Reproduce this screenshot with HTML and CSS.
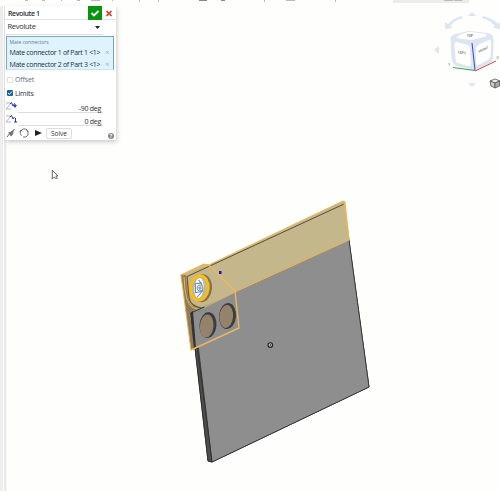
FILE: index.html
```html
<!DOCTYPE html>
<html lang="en">
<head>
<meta charset="utf-8">
<title>Revolute 1</title>
<link rel="stylesheet" href="styles.css">
</head>
<body>
<main class="workspace">
<svg class="scene" viewBox="0 0 500 491" width="500" height="491">
  <!-- toolbar edge -->
  <path d="M393 0h76v3h-76z" fill="#ececeb"/>
  <g fill="#bbb"><path d="M25 0h3v1h-3zM42 0h3v1h-3zM61 0h1v1h-1zM77 0h3v1h-3zM91 0h9v1h-9zM112 0h1v1h-1zM139 0h1v2h-1zM158 0h1v2h-1zM264 0h1v2h-1zM286 0h9v1h-9zM335 0h1v2h-1zM444 0h9v1h-9zM454 0h8v1h-8z"/><path fill="#888" d="M199 0h8v1h-8zM221 0h4v1h-4z"/></g>
  <!-- large plate -->
  <path d="M191 313L344 204L369 387L212 462L208 461Z" fill="#505050" stroke="#292929"/>
  <path d="M194 311L349 240L369 387L212 462Z" fill="#8e8e8f" stroke="#303030" stroke-width=".8"/>
  <path d="M191 313L208 461L212 462L195 330Z" fill="#4d4d4d" stroke="#292929" stroke-width=".7"/>
  <!-- highlighted strip -->
  <path d="M181 275L204 264L209 265L343 201L345 202L349 240L235 292L205 307L193 312L188 308Z" fill="#c4b78b" stroke="#edb656" stroke-width="1.1"/>
  <path d="M186 277L344 204" fill="none" stroke="#55503e" stroke-width="1"/>
  <path d="M344 203L349 240" fill="none" stroke="#edb656"/>
  <path d="M181 275L186 274L189 299Q190 307 199 308L190 314L196 348L191 350Z" fill="#8c7b5d" stroke="#e8ad50" stroke-width="1"/>
  <path d="M187 276L189 298Q191 307 202 308" fill="none" stroke="#685a3d" stroke-width="1.2"/>
  <path d="M183 275L205 265L210 266M184 277Q185 303 192 307Q198 311 207 307" fill="none" stroke="#edb656"/>
  <path d="M190 312L200 308L235 293L239 328L196 348Z" fill="#8e8e8f"/>
  <path d="M190 313L193 311L196 348L194 349Z" fill="#343434"/>
  <path d="M191 313L204 307" stroke="#333"/>
  <path d="M209 265L235 291L239 328L191 350" fill="none" stroke="#efb75d" stroke-width="1.4"/>
  <path d="M205 307L235 292L349 240" fill="none" stroke="#deb36a"/>
  <g transform="rotate(5 207 325)"><ellipse cx="208" cy="325" rx="8.5" ry="13" fill="#3d3d3d"/><ellipse cx="206.8" cy="326" rx="6.8" ry="11.5" fill="#94836a"/></g>
  <g transform="rotate(5 227 316)"><ellipse cx="227.5" cy="316" rx="8.5" ry="13" fill="#3d3d3d"/><ellipse cx="226.3" cy="316.5" rx="6.8" ry="11.5" fill="#94836a"/></g>
  <g transform="rotate(5 200 288)"><ellipse cx="202" cy="288" rx="10" ry="14" fill="#827250"/><ellipse cx="199.5" cy="288" rx="9" ry="12.5" fill="#c7b889" stroke="#ffbd0c" stroke-width="2.4"/><ellipse cx="199" cy="288" rx="4.5" ry="10" fill="#fff"/><path d="M195 284l6-1 2 8-7 2zM198 280l4 5M202 292l-4 5" fill="none" stroke="#6796c5" stroke-width="1.1"/><circle cx="200" cy="288" r="3" fill="#e6eff5" stroke="#6688a4" stroke-width=".8"/><path d="M198 288h4M200 286v4" stroke="#57758c" stroke-width=".7"/></g>
  <path d="M219 271h2.5v3H219z" fill="#1717c9"/>
  <circle cx="270.3" cy="345" r="2.3" fill="#bbb" stroke="#202020" stroke-width="1.1"/><circle cx="270.5" cy="345" r=".7" fill="#222"/>
  <!-- view cube -->
  <g fill="#dce6f0">
    <path d="M468 16l4-4 4 4zM468 83l4 4 4-4zM439 46l-5 4 5 4z"/>
    <path d="M461 16Q452 19 448 24L445 22V29L453 28L450 26Q455 20 463 18ZM483 16Q494 19 498 24L500 22V29L493 28L495 26Q490 20 482 18Z"/>
    <path d="M450.5 38Q451 35 457 33.5L469 31L488 33Q493 34 493.5 39L493 58Q493 62 488 64L475 71L457 66Q452 64 451.5 59Z"/>
  </g>
  <g fill="#fff"><path d="M458 36Q465 32 471 32L486 34Q488 36 484 37L472 40L459 38.5Q455 38 458 36Z"/><path d="M454.5 44Q454.5 41.5 457 42L468 45Q470 46 470 49L471 64Q471 67 468 66L458 63Q455.5 62 455.5 59Z"/><path d="M478 45L489 40Q491.5 40 491 44L490.5 57L488 60L478 65Q476 65 476 62L476 48Z"/></g>
  <text class="cube-label" transform="translate(458 53) skewY(12)" textLength="8" lengthAdjust="spacingAndGlyphs">LEFT</text>
  <text class="cube-label" transform="translate(478.5 53) skewY(-24)" textLength="9.5" lengthAdjust="spacingAndGlyphs">FRONT</text>
  <text class="cube-label top-label" x="467" y="36.8" textLength="6" lengthAdjust="spacingAndGlyphs">TOP</text>
  <path d="M472 43L475 70" stroke="#3d46d0"/><path d="M475 70.5L453 67.5" stroke="#33a944"/><path d="M475 71L496 61" stroke="#df4242"/>
  <text class="axis-x" x="496.5" y="59">X</text><text class="axis-y" x="448" y="66">Y</text>
  <g stroke="#555" stroke-width=".8"><path d="M490 81l5-2 5 2-5 2z" fill="#eee"/><path d="M490 81l5 2v5l-4-2z" fill="#ccc"/><path d="M495 83l4.5-2v5l-4.5 2z" fill="#aaa"/></g>
  <path class="pointer" d="M52.3 170v9l2-2 2 2 1-1-1.5-2h2z"/>
</svg>
<div class="side-edge"></div>
<section class="dialog">
  <header class="heading"><span>Revolute 1</span><button class="accept" aria-label="Accept"><svg width="10" height="8" viewBox="0 0 10 8"><path d="M1.5 4l2.5 2.5L8.5 2" fill="none" stroke="#fff" stroke-width="1.9"/></svg></button><button class="dismiss" aria-label="Cancel"><svg width="6" height="7" viewBox="0 0 6 7"><path d="M.6 1l4.8 5M5.4 1L.6 6" stroke="#d64a35" stroke-width="1.8"/></svg></button></header>
  <div class="select"><span>Revolute</span><svg width="5" height="3" viewBox="0 0 5 3"><path d="M0 0h5L2.5 3z" fill="#222"/></svg></div>
  <div class="connectors"><small>Mate connectors</small><p><span>Mate connector 1 of Part 1 &lt;1&gt;</span><i>×</i></p><p><span>Mate connector 2 of Part 3 &lt;1&gt;</span><i>×</i></p></div>
  <label class="option offset"><span class="box"></span>Offset</label>
  <label class="option limits"><span class="box checked"><svg width="6" height="6" viewBox="0 0 6 6"><path d="M1 3l1.4 1.4L5 1.5" fill="none" stroke="#fff"/></svg></span>Limits</label>
  <div class="limit"><svg width="13" height="9" viewBox="0 0 13 9"><path d="M1 1h5L1 7h5" fill="none" stroke="#a6adb5" stroke-width=".9"/><path d="M5 2l1.5-1.5L8 4l1.5-2.5L11 4" fill="none" stroke="#2933cf"/><path d="M8 3h4l-2 3z" fill="#2933cf"/></svg><span>-90 deg</span></div>
  <div class="limit"><svg width="13" height="9" viewBox="0 0 13 9"><path d="M1 1h5L1 7h5" fill="none" stroke="#a6adb5" stroke-width=".9"/><path d="M5 2l1.5-1.5L8 4l1.5-2M10.5 3v4M9 7h3" fill="none" stroke="#2933cf"/></svg><span>0 deg</span></div>
  <footer class="actions"><svg width="10" height="10" viewBox="0 0 10 10"><path d="M1 9l3-4M8.5 1L6 4" stroke="#666"/><path d="M2 4.5l3-1 3-2-1 5-2 2z" fill="#777"/></svg><svg width="10" height="10" viewBox="0 0 10 10"><path d="M2.5 7.8A4 4 0 0 1 2 2.5L4 1h2.5L9 3v4L7 9H4M.5 4l1.5-2 1.5 1.5M7 1l2 3" fill="none" stroke="#666" stroke-width=".9"/></svg><svg width="7" height="8" viewBox="0 0 7 8"><path d="M0 1l7 3-7 3z" fill="#222"/></svg><button class="solve">Solve</button><span class="help">?</span></footer>
</section>
</main>
</body>
</html>
```

FILE: styles.css
```css
* { box-sizing: border-box; }
body { margin: 0; background: #fefefd; font: 7px/1 "Open Sans", sans-serif; color: #28313a; overflow: hidden; }
button { font: inherit; border: 0; padding: 0; margin: 0; }
.workspace { position: relative; width: 500px; height: 491px; }
.scene { display: block; }
.side-edge { position: absolute; left: 0; top: 6px; bottom: 0; width: 7px; background: linear-gradient(90deg, #eee 0 3px, #fff 3px 4px, #e9e9eb 4px 6px, #f7f7f7 6px); }
.dialog { position: absolute; left: 5px; top: 6px; width: 111px; height: 134px; background: #fff; box-shadow: 1px 2px 4px #aaa9; }
.heading { height: 14px; display: grid; grid-template-columns: 83px 14px 14px; align-items: center; border-bottom: 1px solid #e3e3e3; }
.heading > span { padding-left: 3px; font-weight: 600; letter-spacing: -.4px; }
.accept { width: 14px; height: 14px; display: grid; place-items: center; background: #08940d; }
.dismiss { display: grid; place-items: center; background: none; }
.select { height: 15px; margin-left: 1px; width: 97px; padding: 0 3px 0 1.5px; display: flex; align-items: center; justify-content: space-between; border-bottom: 1px solid #ddd; font-size: 7.5px; letter-spacing: -.3px; }
.connectors { width: 108px; height: 34px; margin: 1px 0 0 1px; padding: 2px 4px 0 2.5px; border: 1px solid #73a8d5; border-bottom-color: #c8e3f0; background: #def3fb; }
.connectors small { display: block; height: 7px; line-height: 7px; font-size: 5px; color: #687884; }
.connectors p { margin: 0; height: 12px; display: flex; align-items: center; justify-content: space-between; font-size: 7px; white-space: nowrap; letter-spacing: -.33px; }
.connectors i { color: #9aafbb; font-style: normal; font-size: 7px; }
.option { display: flex; align-items: center; gap: 2px; height: 14px; padding-left: 2px; letter-spacing: -.15px; }
.offset { margin-top: 3px; height: 13px; color: #64717b; }
.box { width: 6px; height: 6px; border: 1px solid #ddd; border-radius: 1px; display: grid; place-items: center; flex: none; }
.box.checked { background: #1764a6; border: 0; }
.limit { height: 13px; width: 98px; display: grid; grid-template-columns: 13px 85px; align-items: center; }
.limit span { height: 13px; line-height: 17px; text-align: right; padding-right: 2px; border-bottom: 1px solid #ddd; letter-spacing: -.25px; }
.actions { height: 14px; padding-left: 1px; display: flex; align-items: center; gap: 3px; }
.actions > svg:nth-child(3) { margin-left: 3px; }
.solve { width: 26px; height: 11px; margin-left: 1px; border: 1px solid #ddd; border-radius: 2px; background: #fff; color: #28313a; font-size: 6.5px; line-height: 9px; }
.help { width: 6px; height: 6px; margin: 6px 2px 0 auto; border-radius: 50%; background: #888; color: #fff; font-size: 5px; font-weight: 700; line-height: 6px; text-align: center; }
.cube-label { font-size: 3.5px; font-weight: 600; fill: #4c535c; }
.top-label { fill: #454d87; }
.axis-x { font-size: 4px; fill: #df4242; }
.axis-y { font-size: 4px; fill: #33a944; }
.pointer { fill: #fff; stroke: #444; stroke-width: .8; }
```
